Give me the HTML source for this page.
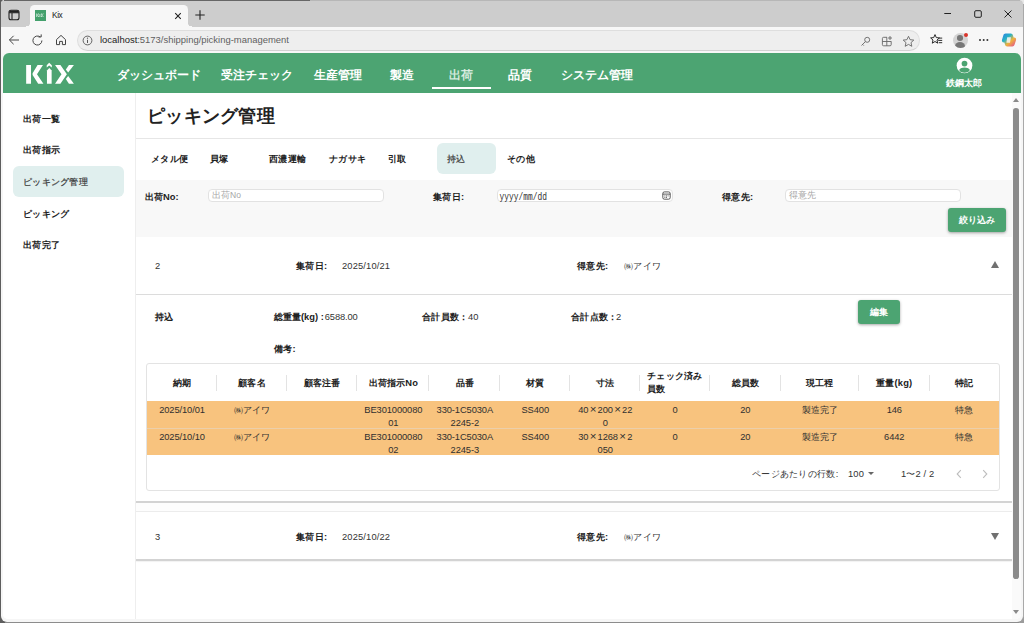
<!DOCTYPE html>
<html lang="ja">
<head>
<meta charset="utf-8">
<title>Kix</title>
<style>
*{box-sizing:border-box;margin:0;padding:0}
html,body{width:1024px;height:623px;overflow:hidden;background:#5e5e5e}
body{font-family:"Liberation Sans",sans-serif;color:#222;position:relative;font-size:10px}
.abs{position:absolute}
#win{position:absolute;left:1px;top:0;width:1022px;height:622px;background:#f6f6f6;border-radius:4px 4px 6px 6px;overflow:hidden}
.flare{position:absolute;top:23px;width:4px;height:4px}
#tabstrip{position:absolute;left:0;top:0;width:1022px;height:27px;background:#cdcdcd}
#tab{position:absolute;left:29px;top:5px;width:158px;height:22px;background:#f7f7f7;border-radius:4.5px 4.5px 0 0}
#toolbar{position:absolute;left:0;top:26px;width:1022px;height:27px;background:linear-gradient(#cdcdcd 0,#cdcdcd 1px,#f7f7f7 1px)}
#url{position:absolute;left:76px;top:4px;width:843px;height:21px;border-radius:11px;background:#eeeeee;border:1px solid #dedede;border-bottom-color:#d2d2d2}
#urltext{position:absolute;left:22px;top:3px;font-size:9.45px;color:#222;white-space:nowrap;letter-spacing:0}
#urltext span{color:#5f5f5f}
#page{position:absolute;left:2px;top:53px;width:1018px;height:566px;background:#fff;border-radius:6px 6px 5px 5px;overflow:hidden}
#hdr{position:absolute;left:0;top:0;width:1018px;height:40px;background:#4ca472}
.nav{position:absolute;top:14px;font-size:12px;font-weight:bold;color:#fff;white-space:nowrap;line-height:16px}
#side{position:absolute;left:0;top:40px;width:133px;height:526px;background:#fff;border-right:1.4px solid #eeeeee}
.sitem{position:absolute;left:20px;font-size:9.33px;letter-spacing:.3px;font-weight:bold;color:#222;white-space:nowrap;line-height:14px}
#main{position:absolute;left:133px;top:40px;width:876px;height:526px;background:#fff}
.t{position:absolute;white-space:nowrap;line-height:14px;font-size:9.33px;color:#333}
.j{letter-spacing:.3px}
.n{letter-spacing:.15px}
.b{font-weight:bold;color:#222}
.btn{position:absolute;background:#4ca472;color:#fff;font-weight:bold;font-size:9px;letter-spacing:.2px;text-align:center;border-radius:3px;box-shadow:0 1px 3px rgba(0,0,0,.35)}
.inp{position:absolute;margin-top:-.7px;height:13.1px;border:1px solid #e2e2e2;border-radius:4px;background:#fff;font-size:8.5px;color:#a6a6a6;line-height:11px;padding-left:3px;white-space:nowrap}

.acc{background:#fff}
.shl{position:absolute;left:0;width:876px;height:1.7px;background:#d3d3d3;box-shadow:0 .8px 1.2px rgba(0,0,0,.07)}
#tbl{border:1px solid #e3e3e3;border-radius:3px;background:#fff}
.thead{position:absolute;left:0;top:0;height:37px;width:852px;display:flex}
.h{position:relative;height:37px;display:flex;align-items:center;justify-content:center;font-size:9.33px;letter-spacing:.2px;font-weight:bold;color:#222;line-height:14px;text-align:center;white-space:nowrap}
.h.l{justify-content:flex-start;text-align:left;padding-left:7px;line-height:13px}
.h i{position:absolute;right:0;top:11px;width:1px;height:16px;background:#e3e3e3}
.tr{position:absolute;left:0;top:37px;height:28.2px;width:852px;display:flex;background:#f8c37e;border-bottom:1px solid #eccfaa}
.tr2{top:65.2px;height:26.3px;border-bottom:0}
.tr2 .c{padding-top:1.4px}
.x{font-weight:normal;font-size:11.5px;line-height:1px;margin:0 1.3px}
.c{font-size:9.33px;letter-spacing:-.1px;color:#303030;line-height:13px;text-align:center;padding-top:2.9px;white-space:nowrap}
</style>
</head>
<body>
<div class="abs" style="left:1012px;top:0;width:12px;height:12px;background:#e8e8e8"></div>
<div class="abs" style="left:1012px;top:611px;width:12px;height:12px;background:#9c9c9c"></div>
<div id="win">
  <div id="tabstrip">
    <div id="tab"></div>
    <div class="flare" style="left:25px;background:radial-gradient(circle at 0 0,rgba(247,247,247,0) 3.6px,#f7f7f7 4.2px)"></div>
    <div class="flare" style="left:187px;background:radial-gradient(circle at 100% 0,rgba(247,247,247,0) 3.6px,#f7f7f7 4.2px)"></div>
    <!-- tab actions icon -->
    <svg class="abs" style="left:7px;top:9px" width="12" height="12" viewBox="0 0 12 12"><rect x="1" y="1.2" width="10" height="9.6" rx="2" fill="none" stroke="#222" stroke-width="1.1"/><path d="M1 3.8H11M4 3.8V10.8" stroke="#222" stroke-width="1.1" fill="none"/><rect x="1.4" y="1.6" width="9.2" height="2" fill="#222"/></svg>
    <!-- favicon -->
    <div class="abs" style="left:33.5px;top:10px;width:11px;height:10.5px;background:#43a06c"></div>
    <svg class="abs" style="left:35px;top:13px" width="8" height="4.3" viewBox="60 70 900 400" preserveAspectRatio="none"><g fill="#eaf5ee"><path d="M105 118H188V440H105Z"/><path d="M300 118H392L290 277L400 440H310L215 290V262Z"/><path d="M460 440V212L500 170L540 212V440Z"/><path d="M598 118H690L800 277L690 440H598L708 277Z"/><path d="M835 118H920L822 248L782 195Z"/><path d="M782 358L822 305L920 440H835Z"/></g></svg>
    <div class="abs" style="left:51px;top:9px;font-size:8.3px;letter-spacing:-.4px;color:#222;line-height:12px">Kix</div>
    <svg class="abs" style="left:173px;top:12px" width="8" height="8" viewBox="0 0 8 8"><path d="M1.2 1.2L6.8 6.8M6.8 1.2L1.2 6.8" stroke="#222" stroke-width="1.1" fill="none"/></svg>
    <svg class="abs" style="left:193px;top:9px" width="12" height="12" viewBox="0 0 12 12"><path d="M6 1.3V10.7M1.3 6H10.7" stroke="#222" stroke-width="1.1" fill="none"/></svg>
    <!-- window controls -->
    <svg class="abs" style="left:941px;top:8px" width="12" height="12" viewBox="0 0 12 12"><path d="M2.3 5.5H9" stroke="#222" stroke-width="1"/></svg>
    <svg class="abs" style="left:971px;top:8px" width="12" height="12" viewBox="0 0 12 12"><rect x="2.7" y="2.7" width="6.6" height="6.6" rx="1.2" fill="none" stroke="#222" stroke-width="1"/></svg>
    <svg class="abs" style="left:1001px;top:8px" width="12" height="12" viewBox="0 0 12 12"><path d="M2.5 2.5L9.5 9.5M9.5 2.5L2.5 9.5" stroke="#222" stroke-width="1"/></svg>
  </div>
  <div id="toolbar">
    <div class="abs" style="left:25px;top:0;width:166px;height:1px;background:#f7f7f7"></div>
    <svg class="abs" style="left:7px;top:8px" width="12" height="12" viewBox="0 0 12 12"><path d="M11 6H1.5M5.6 1.8L1.4 6L5.6 10.2" stroke="#444" stroke-width="1" fill="none"/></svg>
    <svg class="abs" style="left:30px;top:7.5px" width="13" height="13" viewBox="0 0 13 13"><path d="M10.9 6.5A4.5 4.5 0 1 1 9.2 3" stroke="#444" stroke-width="1" fill="none"/><path d="M7.4 2.9H10.2V0.4" stroke="#444" stroke-width="1" fill="none"/></svg>
    <svg class="abs" style="left:54px;top:8px" width="12" height="12" viewBox="0 0 12 12"><path d="M1.5 5.6L6 1.4L10.5 5.6V10.6H7.4V7.4H4.6V10.6H1.5Z" stroke="#444" stroke-width="1" fill="none" stroke-linejoin="round"/></svg>
    <div id="url">
      <svg class="abs" style="left:4px;top:3.5px" width="11" height="11" viewBox="0 0 11 11"><circle cx="5.5" cy="5.5" r="4.4" fill="none" stroke="#555" stroke-width="0.9"/><path d="M5.5 4.8V8" stroke="#555" stroke-width="1"/><circle cx="5.5" cy="3.2" r="0.65" fill="#555"/></svg>
      <div id="urltext">localhost<span>:5173/shipping/picking-management</span></div>
      <!-- key / collections / star -->
      <svg class="abs" style="left:782px;top:4.5px" width="11" height="11" viewBox="0 0 11 11"><circle cx="7.2" cy="3.8" r="2.5" fill="none" stroke="#666" stroke-width="0.9"/><path d="M5.4 5.6L1.5 9.5M2.6 8.4L3.8 9.6" stroke="#666" stroke-width="0.9" fill="none"/></svg>
      <svg class="abs" style="left:803px;top:4px" width="12" height="12" viewBox="0 0 12 12"><path d="M6 2.3H2.6Q1.4 2.3 1.4 3.5V9.6Q1.4 10.8 2.6 10.8H9Q10.2 10.8 10.2 9.6V6.4M5.8 2.3V10.8M1.4 6.5H10.2" stroke="#666" stroke-width="0.9" fill="none"/><path d="M9 1V5M7 3H11" stroke="#666" stroke-width="0.9" fill="none"/></svg>
      <svg class="abs" style="left:824px;top:3.5px" width="13" height="13" viewBox="0 0 13 13"><path d="M6.5 1.3L8.1 4.7L11.8 5.1L9 7.6L9.8 11.3L6.5 9.4L3.2 11.3L4 7.6L1.2 5.1L4.9 4.7Z" stroke="#666" stroke-width="0.9" fill="none" stroke-linejoin="round"/></svg>
    </div>
    <!-- favourites list -->
    <svg class="abs" style="left:928px;top:7px" width="14" height="13" viewBox="0 0 14 13"><path d="M6 1.6L7.3 4.6L10.4 4.9L8 7L8.7 10.2L6 8.5L3.3 10.2L4 7L1.6 4.9L4.7 4.6Z" stroke="#222" stroke-width="0.95" fill="#f7f7f7" stroke-linejoin="round"/><path d="M9.8 5.1H13.2M9.2 7.4H13.2M9.8 9.7H13.2" stroke="#222" stroke-width="0.95"/></svg>
    <!-- profile -->
    <div class="abs" style="left:951.5px;top:6.5px;width:15px;height:15px;border-radius:50%;background:#d4d4d4;overflow:hidden"><div class="abs" style="left:4.7px;top:2.6px;width:5.6px;height:5.6px;border-radius:50%;background:#777"></div><div class="abs" style="left:2.2px;top:9px;width:10.6px;height:9px;border-radius:50%;background:#777"></div></div>
    <div class="abs" style="left:963px;top:6.5px;width:4px;height:4px;border-radius:50%;background:#d9342b"></div>
    <div class="abs" style="left:977.5px;top:13px;width:2px;height:2px;border-radius:50%;background:#333;box-shadow:3.7px 0 0 #333,7.4px 0 0 #333"></div>
    <!-- copilot -->
    <svg class="abs" style="left:1000px;top:6px" width="16" height="16" viewBox="0 0 16 16"><defs><linearGradient id="cg" x1="0" y1="0" x2="1" y2="1"><stop offset="0" stop-color="#2f7fe6"/><stop offset=".35" stop-color="#27b3c4"/><stop offset=".6" stop-color="#f0b43a"/><stop offset="1" stop-color="#e0439a"/></linearGradient></defs><path d="M4.6 1.5H9.6C11 1.5 11.7 2.3 12 3.5L12.6 5.5H13.2C14.7 5.5 15.4 6.9 15 8.2L13.6 12.6C13.2 13.8 12.4 14.5 11.2 14.5H6.3C5 14.5 4.3 13.7 4 12.5L3.4 10.5H2.8C1.3 10.5 0.6 9.1 1 7.8L2.3 3.4C2.7 2.2 3.4 1.5 4.6 1.5Z" fill="url(#cg)"/><path d="M6.2 5.2H10L9 10.8H5.4Z" fill="#f7f7f7" opacity=".85"/></svg>
  </div>
  <div id="page">
    <div id="hdr">
      <!-- KiX logo -->
      <svg class="abs" style="left:17px;top:5px" width="60" height="32" viewBox="0 0 1024 546"><g fill="#fff"><path d="M105 118H188V440H105Z"/><path d="M300 118H392L290 277L400 440H310L215 290V262Z"/><path d="M460 440V212L500 170L540 212V440Z"/><path d="M456 162V124L498 80L543 124V162L498 130Z"/><path d="M598 118H690L800 277L690 440H598L708 277Z"/><path d="M835 118H920L822 248L782 195Z"/><path d="M782 358L822 305L920 440H835Z"/></g></svg>
      <div class="nav" style="left:114px">ダッシュボード</div>
      <div class="nav" style="left:218px">受注チェック</div>
      <div class="nav" style="left:311px">生産管理</div>
      <div class="nav" style="left:387px">製造</div>
      <div class="nav" style="left:446px;font-weight:normal;color:#e3f3ea;-webkit-text-stroke:.25px #e3f3ea">出荷</div>
      <div class="abs" style="left:428.5px;top:34.1px;width:59px;height:1.5px;background:#fff"></div>
      <div class="nav" style="left:505px">品質</div>
      <div class="nav" style="left:558px">システム管理</div>
      <!-- user -->
      <svg class="abs" style="left:952.5px;top:3.7px" width="17" height="17" viewBox="0 0 16 16"><circle cx="8" cy="8" r="7.4" fill="#fff"/><circle cx="8" cy="6.2" r="2.7" fill="#4ca472"/><path d="M2.9 12.2C4 10.4 6 9.8 8 9.8S12 10.4 13.1 12.2A6.2 6.2 0 0 1 2.900 12.2Z" fill="#4ca472"/></svg>
      <div class="abs" style="left:931px;top:24px;width:60px;text-align:center;font-size:9px;font-weight:bold;color:#fff;line-height:13px;white-space:nowrap">鉄鋼太郎</div>
    </div>
    <div id="side">
      <div class="abs" style="left:10px;top:73px;width:111px;height:31px;border-radius:6px;background:#e0efee"></div>
      <div class="sitem" style="top:19px">出荷一覧</div>
      <div class="sitem" style="top:50px">出荷指示</div>
      <div class="sitem" style="top:82px;font-weight:normal;color:#3a3a3a;-webkit-text-stroke:.2px #3a3a3a">ピッキング管理</div>
      <div class="sitem" style="top:114px">ピッキング</div>
      <div class="sitem" style="top:145px">出荷完了</div>
    </div>
    <div id="main">
      <div class="abs" style="left:11px;top:10px;font-size:18.4px;letter-spacing:.3px;font-weight:bold;color:#222;line-height:26px;white-space:nowrap">ピッキング管理</div>
      <div class="abs" style="left:0;top:45px;width:876px;height:1px;background:#e6e6e6"></div>
      <!-- tabs -->
      <div class="abs" style="left:301px;top:50px;width:59px;height:31px;border-radius:6px;background:#e0efee"></div>
      <div class="t b j" style="left:15px;top:59px">メタル便</div>
      <div class="t b j" style="left:74px;top:59px">貝塚</div>
      <div class="t b j" style="left:133px;top:59px">西濃運輸</div>
      <div class="t b j" style="left:193px;top:59px">ナガサキ</div>
      <div class="t b j" style="left:252px;top:59px">引取</div>
      <div class="t j" style="left:311px;top:59px;color:#3a3a3a;-webkit-text-stroke:.2px #3a3a3a">持込</div>
      <div class="t b j" style="left:371px;top:59px">その他</div>
      <!-- filter -->
      <div class="abs" style="left:0;top:86.5px;width:876px;height:57.5px;background:#f8f8f8"></div>
      <div class="t b" style="left:9px;top:96.5px">出荷No:</div>
      <div class="inp" style="left:72px;top:96.5px;width:176px">出荷No</div>
      <div class="t b j" style="left:297px;top:96.5px">集荷日:</div>
      <div class="inp" style="left:361px;top:96.5px;width:176px;color:#333;padding-left:2px"><span style="position:absolute;left:1.6px;top:1.7px;font-family:'Liberation Mono',monospace;font-size:7.9px;line-height:10px;transform:scaleY(1.3);transform-origin:0 50%">yyyy/mm/dd</span>
        <svg class="abs" style="right:1.5px;top:1px" width="9" height="9" viewBox="0 0 9 9"><rect x="0.8" y="0.9" width="7.4" height="7.3" rx="1.6" fill="none" stroke="#3c3c3c" stroke-width="0.85"/><path d="M0.8 3.1H8.2" stroke="#3c3c3c" stroke-width="0.85"/><path d="M2.4 4.9H3.4M4 4.9H5M5.6 4.9H6.6M2.4 6.4H3.4M4 6.4H5" stroke="#3c3c3c" stroke-width="0.8"/></svg></div>
      <div class="t b j" style="left:586px;top:96.5px">得意先:</div>
      <div class="inp" style="left:649px;top:96.5px;width:176px">得意先</div>
      <div class="btn" style="left:812px;top:115px;width:58px;height:24px;line-height:24px">絞り込み</div>
      <!-- accordion 1 -->
      <div class="abs acc" style="left:0;top:144px;width:876px;height:264.6px"></div>
      <div class="shl" style="top:408.1px"></div>
      <div class="t n" style="left:19px;top:166px">2</div>
      <div class="t b j" style="left:160px;top:166px">集荷日:</div>
      <div class="t n" style="left:206px;top:166px">2025/10/21</div>
      <div class="t b j" style="left:441px;top:166px">得意先:</div>
      <div class="t j" style="left:488px;top:166px">㈱アイワ</div>
      <div class="abs" style="left:854.5px;top:168.3px;width:0;height:0;border-left:4.6px solid transparent;border-right:4.6px solid transparent;border-bottom:7.2px solid #707070"></div>
      <div class="abs" style="left:0;top:201px;width:876px;height:1px;background:#dcdcdc"></div>
      <div class="t b j" style="left:19px;top:217px">持込</div>
      <div class="t b" style="left:138px;top:217px">総重量(kg) :<span style="font-weight:normal;color:#333;letter-spacing:-.12px;margin-left:1px">6588.00</span></div>
      <div class="t b j" style="left:286px;top:217px">合計員数：</div>
      <div class="t n" style="left:332px;top:217px">40</div>
      <div class="t b j" style="left:435px;top:217px">合計点数：</div>
      <div class="t n" style="left:480px;top:217px">2</div>
      <div class="btn" style="left:722px;top:207px;width:42px;height:24px;line-height:24px">編集</div>
      <div class="t b j" style="left:138px;top:249px">備考:</div>
      <!-- table -->
      <div class="abs" id="tbl" style="left:10px;top:270px;width:854px;height:128px">
        <div class="thead"><div class="h" style="width:70px"><span>納期</span><i></i></div><div class="h" style="width:70px"><span>顧客名</span><i></i></div><div class="h" style="width:70.5px"><span>顧客注番</span><i></i></div><div class="h" style="width:72px"><span>出荷指示No</span><i></i></div><div class="h" style="width:71px"><span>品番</span><i></i></div><div class="h" style="width:70px"><span>材質</span><i></i></div><div class="h" style="width:70px"><span>寸法</span><i></i></div><div class="h l" style="width:70px"><span>チェック済み<br>員数</span><i></i></div><div class="h" style="width:70.5px"><span>総員数</span><i></i></div><div class="h" style="width:78.5px"><span>現工程</span><i></i></div><div class="h" style="width:70.5px"><span>重量(kg)</span><i></i></div><div class="h" style="width:69.5px"><span>特記</span></div></div>
        <div class="tr"><div class="c" style="width:70px">2025/10/01</div><div class="c" style="width:70px">㈱アイワ</div><div class="c" style="width:70.5px"></div><div class="c" style="width:72px">BE301000080<br>01</div><div class="c" style="width:71px">330-1C5030A<br>2245-2</div><div class="c" style="width:70px">SS400</div><div class="c" style="width:70px">40<b class="x">×</b>200<b class="x">×</b>22<br>0</div><div class="c" style="width:70px">0</div><div class="c" style="width:70.5px">20</div><div class="c" style="width:78.5px">製造完了</div><div class="c" style="width:70.5px">146</div><div class="c" style="width:69.5px">特急</div></div>
        <div class="tr tr2"><div class="c" style="width:70px">2025/10/10</div><div class="c" style="width:70px">㈱アイワ</div><div class="c" style="width:70.5px"></div><div class="c" style="width:72px">BE301000080<br>02</div><div class="c" style="width:71px">330-1C5030A<br>2245-3</div><div class="c" style="width:70px">SS400</div><div class="c" style="width:70px">30<b class="x">×</b>1268<b class="x">×</b>2<br>050</div><div class="c" style="width:70px">0</div><div class="c" style="width:70.5px">20</div><div class="c" style="width:78.5px">製造完了</div><div class="c" style="width:70.5px">6442</div><div class="c" style="width:69.5px">特急</div></div>
        <div class="t j" style="left:605px;top:102.5px">ページあたりの行数:</div>
        <div class="t n" style="left:701px;top:102.5px">100</div>
        <div class="abs" style="left:721px;top:108px;width:0;height:0;border-left:3px solid transparent;border-right:3px solid transparent;border-top:3.5px solid #666"></div>
        <div class="t n" style="left:754px;top:102.5px">1〜2 / 2</div>
        <svg class="abs" style="left:808px;top:104.5px" width="8" height="10" viewBox="0 0 8 10"><path d="M5.8 1.2L2.2 5L5.8 8.8" stroke="#bdbdbd" stroke-width="1.1" fill="none"/></svg>
        <svg class="abs" style="left:834px;top:104.5px" width="8" height="10" viewBox="0 0 8 10"><path d="M2.2 1.2L5.8 5L2.2 8.8" stroke="#bdbdbd" stroke-width="1.1" fill="none"/></svg>
      </div>
      <!-- gap + accordion 2 -->
      <div class="abs" style="left:0;top:410px;width:876px;height:8px;background:#fdfdfd"></div>
      <div class="abs acc" style="left:0;top:417.6px;width:876px;height:49px;border-top:1px solid #ececec"></div>
      <div class="shl" style="top:466.2px"></div>
      <div class="t n" style="left:19px;top:437px">3</div>
      <div class="t b j" style="left:160px;top:437px">集荷日:</div>
      <div class="t n" style="left:206px;top:437px">2025/10/22</div>
      <div class="t b j" style="left:441px;top:437px">得意先:</div>
      <div class="t j" style="left:488px;top:437px">㈱アイワ</div>
      <div class="abs" style="left:854.5px;top:439.8px;width:0;height:0;border-left:4.6px solid transparent;border-right:4.6px solid transparent;border-top:7.2px solid #707070"></div>
    </div>
    <!-- scrollbar -->
    <div class="abs" style="left:1009px;top:40px;width:9px;height:526px;background:#fafafa"></div>
    <div class="abs" style="left:1010px;top:55.4px;width:5.6px;height:470.7px;border-radius:2.8px;background:#8b8b8b"></div>
    <div class="abs" style="left:1009.6px;top:45.3px;width:0;height:0;border-left:3.2px solid transparent;border-right:3.2px solid transparent;border-bottom:4.6px solid #8a8a8a"></div>
    <div class="abs" style="left:1009.6px;top:556.8px;width:0;height:0;border-left:3.2px solid transparent;border-right:3.2px solid transparent;border-top:4.6px solid #8a8a8a"></div>
  </div>
</div>
<div class="abs" style="left:4px;top:0;width:306px;height:1px;background:#666"></div>
<div class="abs" style="left:310px;top:0;width:710px;height:1px;background:#b7b7b7"></div>
<div class="abs" style="left:1023px;top:4px;width:1px;height:613px;background:#a9a9a9"></div>
<div class="abs" style="left:5px;top:622px;width:1014px;height:1px;background:#8c8c8c"></div>
</body>
</html>
